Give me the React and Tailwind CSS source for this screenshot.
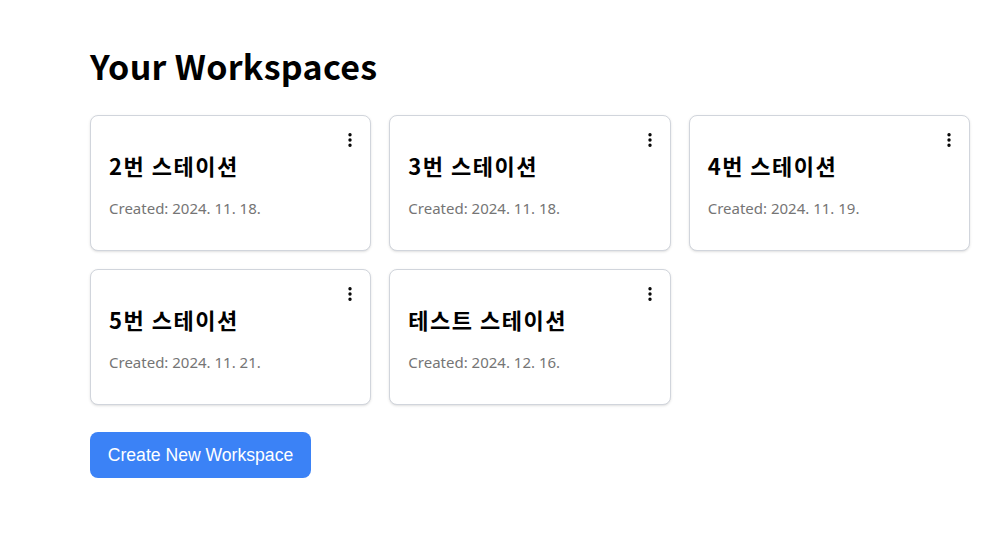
import { EllipsisVertical } from "lucide-react";

const workspaces = [
  { id: 2, name: "2번 스테이션", created: "2024. 11. 18." },
  { id: 3, name: "3번 스테이션", created: "2024. 11. 18." },
  { id: 4, name: "4번 스테이션", created: "2024. 11. 19." },
  { id: 5, name: "5번 스테이션", created: "2024. 11. 21." },
  { id: 6, name: "테스트 스테이션", created: "2024. 12. 16." },
];

const WorkspaceCard = ({ workspace }) => {
  return (
    <div className="relative h-[136px] rounded-lg border border-gray-300 bg-white px-[18px] pt-[33px] shadow-sm">
      {/* menu */}
      <button className="absolute right-[8px] top-[12px] flex h-6 w-6 items-center justify-center text-black">
        <EllipsisVertical size={18} strokeWidth={2.5} />
      </button>
      <h2 className="text-[22px] font-bold leading-[32px] tracking-[1.5px] text-black">
        {workspace.name}
      </h2>
      <p className="mt-[17px] text-[15px] leading-5 text-[#757575] [font-family:'Noto_Sans',sans-serif]">
        Created: {workspace.created}
      </p>
    </div>
  );
};

const App = () => {
  return (
    <div className="min-h-[540px] bg-white pl-[90px] pt-[40px] [font-family:'Noto_Sans_CJK_KR','Noto_Sans',sans-serif]">
      <h1 className="text-[34px] font-bold leading-[52px] tracking-[0.3px] text-black">
        Your Workspaces
      </h1>
      {/* cards */}
      <div className="mt-[23px] grid w-[880px] grid-cols-3 gap-[18px]">
        {workspaces.map((workspace) => (
          <WorkspaceCard key={workspace.id} workspace={workspace} />
        ))}
      </div>
      <button className="mt-[27px] h-[46px] w-[221px] rounded-lg bg-[#3b82f6] text-[17.6px] text-white [font-family:'Liberation_Sans',Arial,sans-serif]">
        Create New Workspace
      </button>
    </div>
  );
};

export default App;
